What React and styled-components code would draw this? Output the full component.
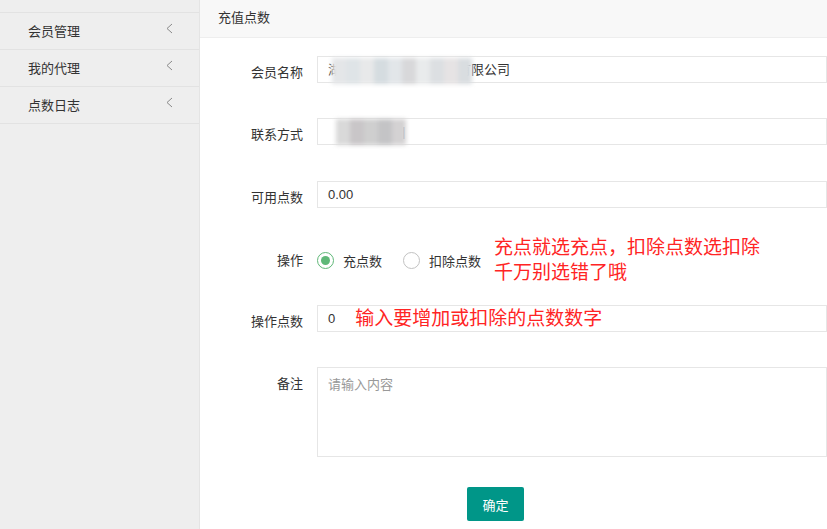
import React from 'react'
import styled, { createGlobalStyle } from 'styled-components'

const GlobalStyle = createGlobalStyle`
body {
  margin: 0;
  overflow: hidden;
  font-family: "Liberation Sans", "Noto Sans CJK SC", sans-serif;
  color: #333;
}
`

const Page = styled.div`
display: flex;
height: 100vh;
`

const Sidebar = styled.div`
width: 199px;
flex-shrink: 0;
background: #eeeeee;
border-right: 1px solid #e4e4e4;
padding-top: 12px;
`

const MenuItem = styled.div`
display: flex;
align-items: center;
justify-content: space-between;
height: 34px;
padding: 0 26px 2px 28px;
font-size: 13px;
color: #333;
border-top: ${props => props.$first ? '1px solid #e2e2e2' : 'none'};
border-bottom: 1px solid #e2e2e2;
`

const Chevron = styled.svg`
width: 7px;
height: 11px;
margin-top: -3px;
`

const Main = styled.div`
flex: 1;
min-width: 0;
display: flex;
flex-direction: column;
`

const Header = styled.div`
height: 37px;
line-height: 36px;
padding-left: 18px;
font-size: 13px;
background: #f8f8f8;
border-bottom: 1px solid #eeeeee;
`

const Form = styled.div`
padding-top: 18px;
`

const Row = styled.div`
display: flex;
align-items: ${props => props.$center ? 'center' : 'flex-start'};
margin-top: ${props => props.$mt || 0}px;
`

const Label = styled.div`
width: 103px;
margin-right: 14px;
flex-shrink: 0;
text-align: right;
font-size: 13px;
height: 27px;
line-height: ${props => props.$center ? 27 : 33}px;
`

const Field = styled.div`
position: relative;
width: 560px;
height: ${props => props.$tall ? 74 : 25}px;
border: 1px solid #e6e6e6;
background: #fff;
padding: ${props => props.$tall ? '7px 10px' : '0 10px'};
box-sizing: content-box;
font-size: 13px;
line-height: ${props => props.$tall ? '20px' : '25px'};
color: ${props => props.$placeholder ? '#999' : '#333'};
display: flex;
align-items: ${props => props.$tall ? 'flex-start' : 'center'};
`

const Mosaic = styled.div`
position: absolute;
top: ${props => props.$top}px;
left: ${props => props.$left}px;
display: flex;
filter: blur(2px);
`

const Tile = styled.div`
width: 14px;
height: 26px;
`

const Hint = styled.div`
font-size: 19px;
line-height: 25px;
color: #ff2424;
margin-left: ${props => props.$ml || 0}px;
`

const Radios = styled.div`
display: flex;
align-items: center;
`

const Radio = styled.div`
display: flex;
align-items: center;
font-size: 13px;
margin-right: ${props => props.$mr}px;
`

const Circle = styled.span`
width: 15px;
height: 15px;
border-radius: 50%;
border: 1.5px solid ${props => props.$on ? '#5FB878' : '#c2c2c2'};
display: flex;
align-items: center;
justify-content: center;
margin-right: 9px;
`

const Dot = styled.span`
width: 9px;
height: 9px;
border-radius: 50%;
background: #5FB878;
`

const Button = styled.button`
margin: 30px 0 0 267px;
width: 57px;
height: 34px;
border: none;
border-radius: 2px;
background: #009688;
color: #fff;
font-size: 13px;
font-family: inherit;
`

const nameTiles = ['#e4e6e8', '#dfe4e7', '#e8e9ea', '#d5dce0', '#e2e6e9', '#d8d8da', '#e9ebec', '#dcdfe2', '#e6e3e4', '#d9dde0']
const phoneTiles = ['#d9d9d9', '#c9c6c8', '#cfcfcf', '#c4c4c6', '#d4d2d3']

function ChevronIcon() {
  return (
    <Chevron viewBox="0 0 7 11">
      <polyline points="6,1 1,5.5 6,10" fill="none" stroke="#8a8a8a" strokeWidth="1" />
    </Chevron>
  )
}

export default function App() {
  return (
    <Page>
      <GlobalStyle />
      <Sidebar>
        {['会员管理', '我的代理', '点数日志'].map((t, i) => (
          <MenuItem key={t} $first={i === 0}>
            {t}
            <ChevronIcon />
          </MenuItem>
        ))}
      </Sidebar>
      <Main>
        <Header>充值点数</Header>
        <Form>
          <Row>
            <Label>会员名称</Label>
            <Field>
              湖南某某某某某某科技有限公司
              <Mosaic $top={1} $left={14}>
                {nameTiles.map((c, i) => <Tile key={i} style={{ background: c }} />)}
              </Mosaic>
            </Field>
          </Row>
          <Row $mt={35}>
            <Label>联系方式</Label>
            <Field>
              <Mosaic $top={0} $left={18}>
                {phoneTiles.map((c, i) => <Tile key={i} style={{ background: c }} />)}
              </Mosaic>
              <span style={{ marginLeft: 74, color: '#555' }}>|</span>
            </Field>
          </Row>
          <Row $mt={36}>
            <Label>可用点数</Label>
            <Field>0.00</Field>
          </Row>
          <Row $mt={27} $center>
            <Label $center>操作</Label>
            <Radios>
              <Radio $mr={21}>
                <Circle $on><Dot /></Circle>
                充点数
              </Radio>
              <Radio $mr={13}>
                <Circle />
                扣除点数
              </Radio>
            </Radios>
            <Hint>充点就选充点，扣除点数选扣除<br />千万别选错了哦</Hint>
          </Row>
          <Row $mt={20}>
            <Label>操作点数</Label>
            <Field>
              0
              <Hint $ml={20}>输入要增加或扣除的点数数字</Hint>
            </Field>
          </Row>
          <Row $mt={35}>
            <Label>备注</Label>
            <Field $tall $placeholder>请输入内容</Field>
          </Row>
          <Button>确定</Button>
        </Form>
      </Main>
    </Page>
  )
}
